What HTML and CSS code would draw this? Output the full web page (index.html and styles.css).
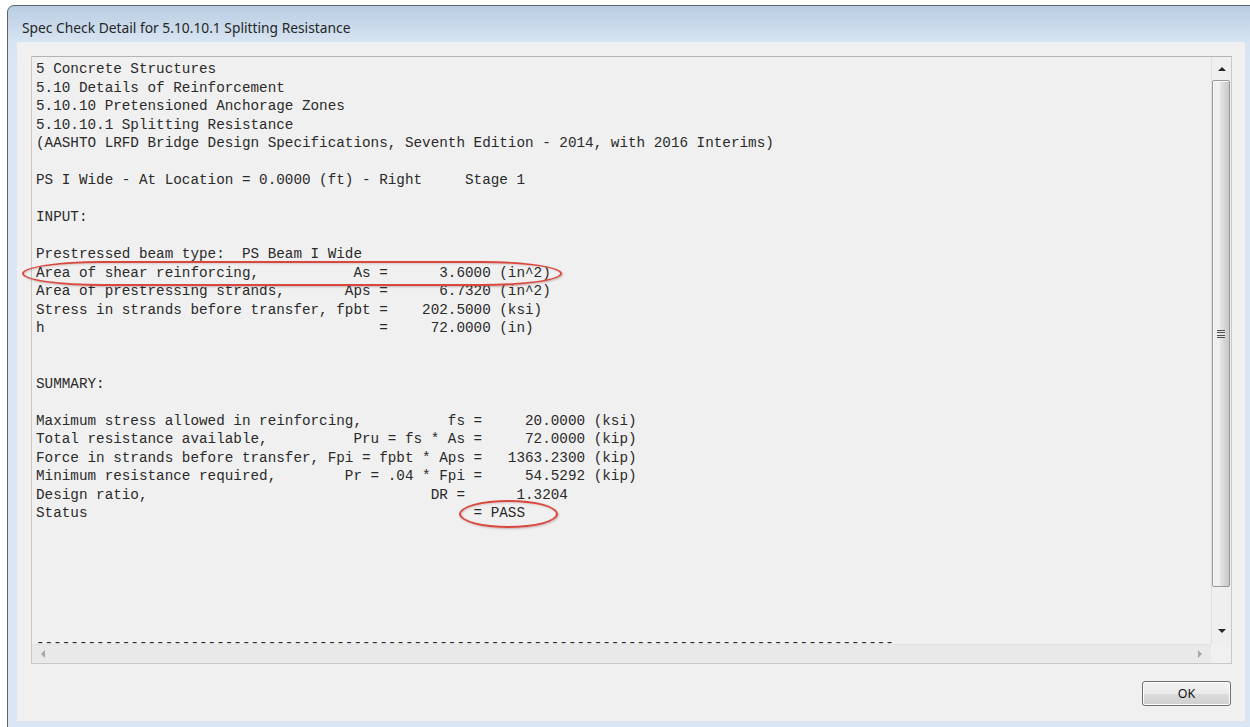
FILE: index.html
```html
<!DOCTYPE html>
<html>
<head>
<meta charset="utf-8">
<title>Spec Check Detail</title>
<link rel="stylesheet" href="styles.css">
</head>
<body>
<div class="window">
  <div class="titlebar">
    <span class="title">Spec Check Detail for 5.10.10.1 Splitting Resistance</span>
  </div>
  <div class="client">
    <div class="textbox">
      <pre class="report">5 Concrete Structures
5.10 Details of Reinforcement
5.10.10 Pretensioned Anchorage Zones
5.10.10.1 Splitting Resistance
(AASHTO LRFD Bridge Design Specifications, Seventh Edition - 2014, with 2016 Interims)

PS I Wide - At Location = 0.0000 (ft) - Right     Stage 1

INPUT:

Prestressed beam type:  PS Beam I Wide
Area of shear reinforcing,           As =      3.6000 (in^2)
Area of prestressing strands,       Aps =      6.7320 (in^2)
Stress in strands before transfer, fpbt =    202.5000 (ksi)
h                                       =     72.0000 (in)


SUMMARY:

Maximum stress allowed in reinforcing,          fs =     20.0000 (ksi)
Total resistance available,          Pru = fs * As =     72.0000 (kip)
Force in strands before transfer, Fpi = fpbt * Aps =   1363.2300 (kip)
Minimum resistance required,        Pr = .04 * Fpi =     54.5292 (kip)
Design ratio,                                 DR =      1.3204
Status                                             = PASS






----------------------------------------------------------------------------------------------------</pre>
      <div class="vscroll">
        <div class="sb-btn"><span class="arrow arrow-up"></span></div>
        <div class="thumb"><span class="grip"></span></div>
        <div class="sb-track"></div>
        <div class="sb-btn"><span class="arrow arrow-down"></span></div>
      </div>
      <div class="hscroll">
        <span class="arrow arrow-left"></span>
        <span class="arrow arrow-right"></span>
      </div>
      <div class="corner"></div>
      <div class="mark mark-row"></div>
      <div class="mark mark-status"></div>
    </div>
    <div class="actions">
      <button class="btn" type="button">OK</button>
    </div>
  </div>
</div>
</body>
</html>
```

FILE: styles.css
```css
html, body {
  margin: 0;
  padding: 0;
}

body {
  width: 1250px;
  height: 727px;
  overflow: hidden;
  background: #ffffff;
}

/* dialog frame */
.window {
  margin: 5px 0 0 7px;
  width: 1262px;
  height: 740px;
  box-sizing: border-box;
  border: 1px solid #59636e;
  border-radius: 7px 7px 0 0;
  background: linear-gradient(to bottom, #b9cde1 0px, #c6d7e9 16px, #d6e3f1 34px, #dae6f3 60px, #dae6f3 100%);
  padding: 0 0 0 9px;
}

.titlebar {
  height: 36px;
  box-sizing: border-box;
  padding: 12px 0 0 5px;
}

.title {
  font-family: "Noto Sans", "Open Sans", sans-serif;
  font-size: 13.8px;
  line-height: 20px;
  color: #262626;
}

.client {
  width: 1228px;
  height: 679px;
  box-sizing: border-box;
  background: #f0f0f0;
  padding: 14px 13px 15px 14px;
  display: flex;
  flex-direction: column;
}

/* read-only report box */
.textbox {
  position: relative;
  height: 608px;
  box-sizing: border-box;
  border: 1px solid #c9c9c9;
  border-top-color: #b4b4b4;
  display: grid;
  grid-template-columns: minmax(0, 1fr) 20px;
  grid-template-rows: minmax(0, 1fr) 19px;
  background: #f0f0f0;
}

.report {
  margin: 0;
  padding: 3px 0 0 4px;
  font-family: "Liberation Mono", "Courier New", monospace;
  font-size: 14.3px;
  line-height: 18.5px;
  color: #2a2a2a;
  white-space: pre;
}

/* vertical scrollbar */
.vscroll {
  display: flex;
  flex-direction: column;
  border-left: 1px solid #e1e1e1;
  background: #efefef;
  padding-bottom: 2px;
}

.sb-btn {
  height: 23px;
  display: flex;
  align-items: center;
  justify-content: center;
}

.thumb {
  height: 505px;
  margin: 0 1px 0 0;
  border: 1px solid #979797;
  border-radius: 2px;
  background: linear-gradient(to right, #ececec 0%, #f2f2f2 35%, #e2e2e2 50%, #d3d3d3 75%, #c9c9c9 100%);
  box-shadow: inset 1px 1px 0 #fbfbfb;
  display: flex;
  align-items: center;
  justify-content: center;
}

.grip {
  width: 8px;
  height: 8px;
  background: repeating-linear-gradient(to bottom, #4d4d4d 0px, #4d4d4d 1px, #e8e8e8 1px, #e8e8e8 2px, transparent 2px, transparent 2.5px);
  margin-left: -1px;
}

.sb-track {
  flex: 1;
}

.arrow {
  display: block;
  width: 0;
  height: 0;
}

.arrow-up {
  border-left: 4px solid transparent;
  border-right: 4px solid transparent;
  border-bottom: 4px solid #262626;
}

.arrow-down {
  border-left: 4px solid transparent;
  border-right: 4px solid transparent;
  border-top: 4px solid #262626;
}

/* horizontal scrollbar (disabled) */
.hscroll {
  display: flex;
  align-items: center;
  justify-content: space-between;
  padding: 0 9px 0 9px;
  border-top: 1px solid #e2e2e2;
  background: #e9e9e9;
}

.arrow-left {
  border-top: 4px solid transparent;
  border-bottom: 4px solid transparent;
  border-right: 4px solid #a6a6a6;
}

.arrow-right {
  border-top: 4px solid transparent;
  border-bottom: 4px solid transparent;
  border-left: 4px solid #a6a6a6;
}

.corner {
  background: #f0f0f0;
}

/* red highlight rings drawn over the report */
.mark {
  position: absolute;
  box-sizing: border-box;
  border: 2.5px solid #d9483e;
  box-shadow: 1px 1px 2px rgba(80, 0, 0, 0.25), inset 1px 1px 2px rgba(80, 0, 0, 0.15);
  pointer-events: none;
}

.mark-row {
  left: -10px;
  top: 204px;
  width: 540px;
  height: 25px;
  border-radius: 80px / 12.5px;
}

.mark-status {
  left: 427px;
  top: 443px;
  width: 99px;
  height: 28px;
  border-radius: 50%;
}

/* dialog buttons */
.actions {
  margin-top: 17px;
  display: flex;
  justify-content: flex-end;
  padding-right: 1px;
}

.btn {
  width: 89px;
  height: 25px;
  box-sizing: border-box;
  border: 1px solid #707070;
  border-radius: 3px;
  background: linear-gradient(to bottom, #f2f2f2 0%, #ebebeb 50%, #dddddd 51%, #cfcfcf 100%);
  box-shadow: inset 0 0 0 1px #fcfcfc;
  font-family: "Noto Sans", "Open Sans", sans-serif;
  font-size: 12.5px;
  color: #111111;
  padding: 0;
  line-height: 21px;
}
```
